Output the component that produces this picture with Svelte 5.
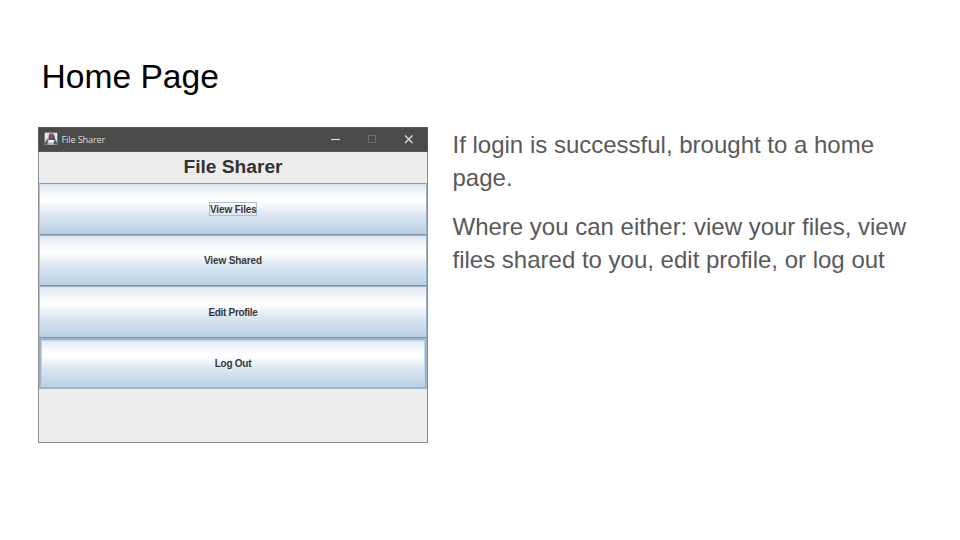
<script>
  const actions = [
    { label: 'View Files', kind: 'focused' },
    { label: 'View Shared', kind: 'shared' },
    { label: 'Edit Profile', kind: 'edit' },
    { label: 'Log Out', kind: 'logout' }
  ];
</script>

<main class="slide">
  <h1>Home Page</h1>
  <div class="columns">
    <section class="window">
      <header class="titlebar">
        <svg class="app-icon" width="14" height="14" viewBox="0 0 14 14">
          <rect x="0.5" y="0.5" width="13" height="12.5" rx="1" fill="#aab6c2" />
          <path d="M1 1h4.500L4 5.500 1 8zM10 1h3v8l-2.500-3z" fill="#e3e9ee" />
          <path d="M5 2.500 7 1.500l3 1.500 1.500 5-2 1.500-5-1z" fill="#4d545b" />
          <path d="M4 8h6l1 2.500H3z" fill="#f4f4f4" />
          <path d="M1 10.500 4 7.500l.5 2L3 11.500l2 1H1zM10 9l1.500-.5L13 11v1.500H9.500z" fill="#4b5967" />
          <ellipse cx="7.400" cy="4.600" rx="1.900" ry="2" fill="#cf3a36" />
        </svg>
        <span class="caption">File Sharer</span>
        <svg class="controls" width="84" height="14" viewBox="0 0 84 14">
          <path d="M1 7.500h9" stroke="#d5d5d4" stroke-width="1.2" />
          <rect x="38.500" y="3.500" width="7" height="7" fill="none" stroke="#6c6b69" />
          <path d="m75 3.500 7.500 7.500m0-7.500-7.500 7.500" stroke="#dededd" stroke-width="1.4" />
        </svg>
      </header>
      <h2><span>File Sharer</span></h2>
      <nav>
        {#each actions as action}
          <button class={action.kind}><span>{action.label}</span></button>
        {/each}
      </nav>
    </section>
    <section class="notes">
      <p>If login is successful, brought to a home<br />page.</p>
      <p>Where you can either: view your files, view<br />files shared to you, edit profile, or log out</p>
    </section>
  </div>
</main>

<style>
  :global(body) { margin: 0; background: #fff; }
  .slide {
    box-sizing: border-box;
    width: 960px;
    height: 540px;
    padding: 57px 38px 0;
    overflow: hidden;
    background: #fff;
    font-family: "Liberation Sans", Arial, sans-serif;
  }
  h1 {
    margin: 0 0 30px;
    padding-left: 3.5px;
    height: 40px;
    line-height: 40px;
    font-size: 33.6px;
    font-weight: 400;
    color: #000;
  }
  .columns { display: flex; gap: 24.5px; }
  .window {
    box-sizing: border-box;
    flex: none;
    display: flex;
    flex-direction: column;
    width: 390px;
    height: 316px;
    border: 1px solid #8c8c8e;
    border-top: 0;
    background: #ededed;
  }
  .titlebar {
    box-sizing: border-box;
    display: flex;
    align-items: center;
    height: 25px;
    margin: 0 -1px;
    padding: 0 13px 1px 5px;
    border: 1px solid #5b5a58;
    background: #4b4a48;
  }
  .app-icon { flex: none; }
  .caption {
    margin-left: 3.5px;
    font: 9.2px "Open Sans", "Noto Sans", sans-serif;
    letter-spacing: -0.15px;
    color: #dededd;
  }
  .controls { margin-left: auto; }
  h2 {
    margin: 0;
    height: 31px;
    line-height: 30px;
    text-align: center;
    font-size: 19.2px;
    font-weight: 700;
    color: #333;
  }
  nav { display: flex; flex-direction: column; }
  button {
    box-sizing: border-box;
    display: flex;
    align-items: center;
    justify-content: center;
    width: 100%;
    height: 51.5px;
    margin: 0;
    padding: 0;
    border: 1px solid #a2b3c4;
    border-left-color: #b3c6d7;
    border-right-color: #9fb3c6;
    border-bottom-color: #7f92a6;
    border-radius: 0;
    background: linear-gradient(#dfe9f3 0%, #fff 30%, #fff 35%, #dce7f2 60%, #b9d0e5 100%);
    box-shadow: inset 0 1px #d9e5ef;
    font: 700 10px "Liberation Sans", Arial, sans-serif;
    color: #383838;
  }
  .focused { border-top-color: #8d9aac; }
  .focused span {
    box-sizing: border-box;
    width: 48px;
    height: 14px;
    line-height: 13px;
    border: 1px solid #a9bfd4;
    white-space: nowrap;
    letter-spacing: -0.15px;
  }
  .shared { padding-top: 1px; letter-spacing: -0.1px; }
  .edit { padding-top: 1px; letter-spacing: -0.3px; }
  .logout {
    height: 51px;
    border: 2px solid #9eb4ca;
    box-shadow: inset 0 0 0 1px #c0d2e3;
    letter-spacing: -0.25px;
  }
  .notes {
    flex: none;
    padding-top: 0.5px;
    font-size: 24px;
    line-height: 33px;
    white-space: nowrap;
    color: #595959;
  }
  .notes p { margin: 0 0 16px; }
</style>
